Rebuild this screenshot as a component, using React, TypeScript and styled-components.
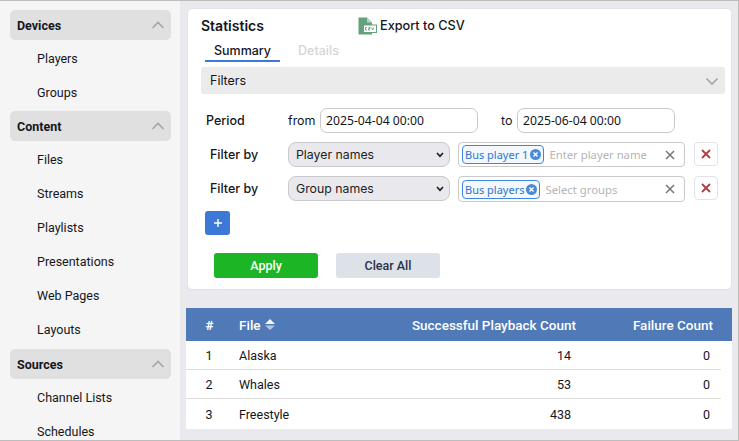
import React from "react";
import styled, { createGlobalStyle } from "styled-components";

const Global = createGlobalStyle`
  html, body { margin: 0; padding: 0; height: 100%; overflow: hidden; }
  * { box-sizing: border-box; }
`;

const Page = styled.div`
  width: 739px;
  height: 441px;
  display: flex;
  overflow: hidden;
  background: #e9e9ee;
  border-top: 1px solid #bdbdbd;
  border-right: 1px solid #bdbdbd;
  border-bottom: 1px solid #bdbdbd;
  font-family: Inter, sans-serif;
  color: #14161c;
`;

const Sidebar = styled.nav`
  flex: 0 0 180px;
  height: 440px;
  overflow: hidden;
  padding: 9px 9px 0 10px;
  background: #f5f5f5;
  font-family: Roboto, sans-serif;
  font-size: 12.5px;
`;

const SideHeader = styled.div`
  height: 30px;
  margin-bottom: 1px;
  padding: 0 6px 0 7px;
  display: flex;
  align-items: center;
  justify-content: space-between;
  background: #e0e0e0;
  border-radius: 5px;
  font-weight: 700;
`;

const SideItem = styled.div<{ $gap?: number }>`
  height: 34px;
  padding-left: 27px;
  display: flex;
  align-items: center;
  margin-bottom: ${(p) => p.$gap ?? 0}px;
`;

const Main = styled.main`
  flex: 1;
  min-width: 0;
  padding: 7px 6px 0 6px;
  display: flex;
  flex-direction: column;
`;

const Panel = styled.section`
  height: 282px;
  margin-left: 1px;
  padding: 0 6px 0 13px;
  background: #fff;
  border-radius: 5px;
  border: 1px solid #e2e2e8;
`;

const TitleRow = styled.div`
  height: 33px;
  display: flex;
  align-items: center;
`;

const Title = styled.h1`
  width: 157px;
  margin: 0;
  font-size: 14px;
  font-weight: 600;
`;

const ExportLink = styled.div`
  display: flex;
  align-items: center;
  gap: 3px;
  font-size: 12.7px;
  font-weight: 500;
`;

const Tabs = styled.div`
  margin-left: 4px;
  height: 20px;
  display: flex;
  font-size: 12.5px;
  font-weight: 500;
`;

const Tab = styled.div<{ $active?: boolean }>`
  width: 75px;
  margin-right: 18px;
  padding-top: 1px;
  text-align: center;
  color: ${(p) => (p.$active ? "#14161c" : "#d6d6d6")};
  border-bottom: ${(p) => (p.$active ? "2px solid #3c79d6" : "none")};
  &:last-child { width: 41px; }
`;

const FiltersBar = styled.div`
  height: 27px;
  margin-top: 5px;
  padding: 0 6px 0 9px;
  display: flex;
  align-items: center;
  justify-content: space-between;
  background: #ebebeb;
  border-radius: 3px;
  font-size: 12.5px;
`;

const Row = styled.div`
  display: flex;
  align-items: center;
  height: 25px;
`;

const PeriodRow = styled(Row)`
  margin-top: 14px;
  font-size: 12.5px;
`;

const FilterRow = styled(Row)`
  margin-top: 9px;
`;

const PeriodLabel = styled.span`
  width: 82px;
  margin-left: 5px;
  font-weight: 500;
`;

const Word = styled.span<{ $w: number; $ml?: number }>`
  width: ${(p) => p.$w}px;
  margin-left: ${(p) => p.$ml ?? 0}px;
  font-size: 12.5px;
`;

const DateInput = styled.input`
  width: 158px;
  height: 25px;
  padding: 0 5px;
  border: 1px solid #c9c9c9;
  border-radius: 7px;
  font: 12.2px "Noto Sans", sans-serif;
  color: #14161c;
  background: #fff;
  outline: none;
`;

const FilterLabel = styled.span`
  width: 78px;
  margin-left: 9px;
  font-size: 12.5px;
  font-weight: 500;
`;

const arrow =
  "data:image/svg+xml;utf8,<svg xmlns='http://www.w3.org/2000/svg' width='8' height='6' viewBox='0 0 8 6'><path d='M1 1 L4 4.3 L7 1' fill='none' stroke='%23202020' stroke-width='1.7'/></svg>";

const Select = styled.select`
  appearance: none;
  width: 162px;
  height: 100%;
  padding: 0 16px 0 7px;
  border: 1px solid #c9c9c9;
  border-radius: 8px;
  background: #e9e9ed url("${arrow}") no-repeat right 5px center;
  font: 12.3px Inter, sans-serif;
  color: #1c1e24;
  outline: none;
`;

const TagBox = styled.div<{ $tall?: boolean }>`
  width: 227px;
  height: ${(p) => (p.$tall ? "26px" : "25px")};
  align-self: flex-start;
  margin-left: 8px;
  padding: 0 9px 0 3px;
  display: flex;
  align-items: center;
  border: 1px solid #c9c9c9;
  border-radius: 4px;
  font-family: "Noto Sans", sans-serif;
  font-size: 11px;
`;

const Tag = styled.span`
  height: 19px;
  padding: 0 2px 0 2px;
  display: inline-flex;
  align-items: center;
  gap: 2px;
  color: #2f74d0;
  background: #f3f8fe;
  border: 1px solid #3f86e4;
  border-radius: 4px;
  white-space: nowrap;
`;

const Placeholder = styled.span`
  flex: 1;
  margin-left: 5px;
  font-size: 11.3px;
  color: #b5b5b5;
  white-space: nowrap;
`;

const DeleteBtn = styled.button`
  width: 24px;
  height: 24px;
  align-self: flex-start;
  margin-left: 9px;
  padding: 0;
  display: flex;
  align-items: center;
  justify-content: center;
  background: #fff;
  border: 1px solid #e0e3e8;
  border-radius: 4px;
`;

const AddBtn = styled.button`
  width: 25px;
  height: 24px;
  margin: 10px 0 0 4px;
  padding: 0;
  display: flex;
  align-items: center;
  justify-content: center;
  background: #3c79d6;
  border: none;
  border-radius: 3px;
`;

const Actions = styled.div`
  margin: 18px 0 0 13px;
  display: flex;
  gap: 18px;
`;

const ActionBtn = styled.button<{ $primary?: boolean }>`
  width: 104px;
  height: 25px;
  padding: 0;
  border: none;
  border-radius: 3px;
  font: 500 12.5px Roboto, sans-serif;
  background: ${(p) => (p.$primary ? "#1cb526" : "#dde2e8")};
  color: ${(p) => (p.$primary ? "#fff" : "#2a3246")};
`;

const Table = styled.div`
  margin-top: 18px;
  font-family: Roboto, sans-serif;
  font-size: 12.5px;
`;

const TableRow = styled.div`
  display: grid;
  grid-template-columns: 53px 1fr 170px 137px 18px;
  align-items: center;
`;

const HeadRow = styled(TableRow)`
  height: 33px;
  background: #4f79b7;
  color: #fff;
  font-size: 13.5px;
  font-weight: 500;
  grid-template-columns: 53px 1fr 170px 137px 19px;
`;

const BodyRow = styled(TableRow)`
  height: 29px;
  background: #fff;
  background-image: linear-gradient(#dedede, #dedede);
  background-size: calc(100% - 11px) 1px;
  background-repeat: no-repeat;
  background-position: left bottom;
  &:last-child { background-image: none; height: 30px; }
`;

const HeadNum = styled.span`
  text-align: center;
  padding-right: 6px;
  font-weight: 700;
`;

const HeadFile = styled.span`
  display: flex;
  align-items: center;
  gap: 4px;
`;

const NumCell = styled.span`
  text-align: center;
  padding-right: 7px;
`;

const RightCell = styled.span`
  text-align: right;
  white-space: nowrap;
`;

const PadRight = styled(RightCell)`
  padding-right: 6px;
`;

const PadRightB = styled(RightCell)`
  padding-right: 4px;
`;

const Chevron = ({ up, size = 14 }: { up?: boolean; size?: number }) => (
  <svg width={size} height={size} viewBox="0 0 14 14" fill="none" stroke="#a5a5a5" strokeWidth="1.6">
    <path d={up ? "M1.5 10 L7 4.5 L12.5 10" : "M1.5 4.5 L7 10 L12.5 4.5"} />
  </svg>
);

const CsvIcon = () => (
  <svg width="19" height="18" viewBox="0 0 19 18">
    <path d="M0.5 0.5 H9 L14 5.5 V17.5 H0.5 Z" fill="#65a17e" />
    <path d="M9 0.5 V5.5 H14 Z" fill="#b9d5c4" />
    <rect x="5.5" y="8" width="13" height="7.5" fill="#fff" stroke="#65a17e" strokeWidth="1" />
    <path d="M7.5 10.5 H9 M7.5 13 H9 M7.5 10.5 V13 M10.5 10.5 H12 V11.7 H10.5 V13 H12 M13.5 10.5 L14.7 13 L15.9 10.5" stroke="#65a17e" strokeWidth="0.9" fill="none" />
  </svg>
);

const TagClose = () => (
  <svg width="11" height="11" viewBox="0 0 11 11">
    <circle cx="5.5" cy="5.5" r="5.5" fill="#4a8ad8" />
    <path d="M3.5 3.5 L7.5 7.5 M7.5 3.5 L3.5 7.5" stroke="#fff" strokeWidth="1.4" />
  </svg>
);

const ClearX = () => (
  <svg width="10" height="10" viewBox="0 0 10 10">
    <path d="M1 1 L9 9 M9 1 L1 9" stroke="#757575" strokeWidth="1.5" />
  </svg>
);

const RedX = () => (
  <svg width="10" height="10" viewBox="0 0 10 10">
    <path d="M1 1 L9 9 M9 1 L1 9" stroke="#b23b45" strokeWidth="1.8" />
  </svg>
);

const Plus = () => (
  <svg width="10" height="10" viewBox="0 0 10 10">
    <path d="M5 1 V9 M1 5 H9" stroke="#fff" strokeWidth="1.4" />
  </svg>
);

const SortIcon = () => (
  <svg width="10" height="11" viewBox="0 0 10 11">
    <path d="M5 0 L10 5 H0 Z" fill="#f2f5fa" />
    <path d="M0 6.5 H10 L5 11 Z" fill="#b4c6e0" />
  </svg>
);

const groups: { name: string; items: string[]; gap: number }[] = [
  { name: "Devices", items: ["Players", "Groups"], gap: 2 },
  { name: "Content", items: ["Files", "Streams", "Playlists", "Presentations", "Web Pages", "Layouts"], gap: 3 },
  { name: "Sources", items: ["Channel Lists", "Schedules"], gap: 0 },
];

const rows = [
  { n: 1, file: "Alaska", ok: 14, fail: 0 },
  { n: 2, file: "Whales", ok: 53, fail: 0 },
  { n: 3, file: "Freestyle", ok: 438, fail: 0 },
];

export default function App() {
  return (
    <>
      <Global />
      <Page>
        <Sidebar>
          {groups.map((g) => (
            <React.Fragment key={g.name}>
              <SideHeader>
                {g.name}
                <Chevron up />
              </SideHeader>
              {g.items.map((it, i) => (
                <SideItem key={it} $gap={i === g.items.length - 1 ? g.gap : 0}>{it}</SideItem>
              ))}
            </React.Fragment>
          ))}
        </Sidebar>
        <Main>
          <Panel>
            <TitleRow>
              <Title>Statistics</Title>
              <ExportLink>
                <CsvIcon />
                Export to CSV
              </ExportLink>
            </TitleRow>
            <Tabs>
              <Tab $active>Summary</Tab>
              <Tab>Details</Tab>
            </Tabs>
            <FiltersBar>
              Filters
              <Chevron />
            </FiltersBar>
            <PeriodRow>
              <PeriodLabel>Period</PeriodLabel>
              <Word $w={32}>from</Word>
              <DateInput defaultValue="2025-04-04 00:00" />
              <Word $w={16} $ml={23}>to</Word>
              <DateInput defaultValue="2025-06-04 00:00" />
            </PeriodRow>
            <FilterRow>
              <FilterLabel>Filter by</FilterLabel>
              <Select defaultValue="p">
                <option value="p">Player names</option>
              </Select>
              <TagBox>
                <Tag>Bus player 1<TagClose /></Tag>
                <Placeholder>Enter player name</Placeholder>
                <ClearX />
              </TagBox>
              <DeleteBtn><RedX /></DeleteBtn>
            </FilterRow>
            <FilterRow>
              <FilterLabel>Filter by</FilterLabel>
              <Select defaultValue="g">
                <option value="g">Group names</option>
              </Select>
              <TagBox $tall>
                <Tag>Bus players<TagClose /></Tag>
                <Placeholder>Select groups</Placeholder>
                <ClearX />
              </TagBox>
              <DeleteBtn><RedX /></DeleteBtn>
            </FilterRow>
            <AddBtn><Plus /></AddBtn>
            <Actions>
              <ActionBtn $primary>Apply</ActionBtn>
              <ActionBtn>Clear All</ActionBtn>
            </Actions>
          </Panel>
          <Table>
            <HeadRow>
              <HeadNum>#</HeadNum>
              <HeadFile>File <SortIcon /></HeadFile>
              <RightCell>Successful Playback Count</RightCell>
              <RightCell>Failure Count</RightCell>
              <span />
            </HeadRow>
            {rows.map((r) => (
              <BodyRow key={r.n}>
                <NumCell>{r.n}</NumCell>
                <span>{r.file}</span>
                <PadRight>{r.ok}</PadRight>
                <PadRightB>{r.fail}</PadRightB>
                <span />
              </BodyRow>
            ))}
          </Table>
        </Main>
      </Page>
    </>
  );
}
